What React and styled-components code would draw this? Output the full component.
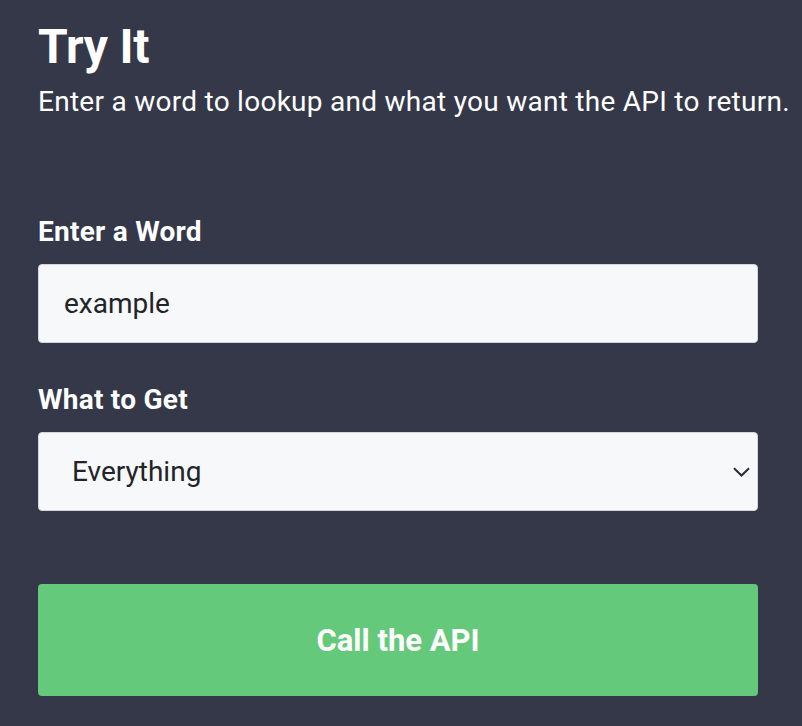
import React, { useState } from "react";
import styled, { createGlobalStyle } from "styled-components";

const GlobalStyle = createGlobalStyle`
  html, body {
    margin: 0;
    padding: 0;
    background: #343849;
  }
  body {
    font-family: Roboto, "Open Sans", Arial, sans-serif;
    -webkit-font-smoothing: antialiased;
  }
`;

const Page = styled.main`
  box-sizing: border-box;
  width: 802px;
  min-height: 726px;
  padding: 19px 0 30px 38px;
  background: #343849;
  color: #ffffff;
`;

const Title = styled.h1`
  margin: 0;
  font-size: 48px;
  line-height: 56px;
  font-weight: 700;
  letter-spacing: -0.2px;
`;

const Subtitle = styled.p`
  margin: 11px 0 0;
  font-size: 28px;
  line-height: 32px;
  font-weight: 400;
  letter-spacing: 0.27px;
  white-space: nowrap;
`;

const Form = styled.form`
  display: flex;
  flex-direction: column;
  width: 720px;
  margin-top: 98px;
`;

const Field = styled.div`
  display: flex;
  flex-direction: column;
  gap: 16px;
  margin-bottom: ${(p) => p.$after}px;
`;

const Label = styled.label`
  font-size: 28px;
  line-height: 32px;
  font-weight: 700;
  letter-spacing: 0.25px;
`;

const boxStyles = `
  box-sizing: border-box;
  width: 100%;
  height: 79px;
  margin: 0;
  border: 1px solid #d3d6dc;
  border-radius: 4px;
  background: #f7f8fa;
  color: #222428;
  font-family: Roboto, "Open Sans", Arial, sans-serif;
  font-size: 28px;
  outline: none;
`;

const TextInput = styled.input`
  ${boxStyles}
  padding: 0 25px;
`;

const SelectWrap = styled.div`
  position: relative;
  width: 100%;
`;

const Select = styled.select`
  ${boxStyles}
  appearance: none;
  -webkit-appearance: none;
  padding: 0 50px 0 33px;
`;

const Chevron = styled.svg`
  position: absolute;
  right: 8px;
  top: 35px;
  width: 17px;
  height: 10px;
  pointer-events: none;
`;

const Button = styled.button`
  box-sizing: border-box;
  width: 100%;
  height: 112px;
  border: none;
  border-radius: 4px;
  background: #64c97a;
  color: #ffffff;
  font-family: Roboto, "Open Sans", Arial, sans-serif;
  font-size: 31px;
  font-weight: 700;
  cursor: pointer;
`;

export default function App() {
  const [word, setWord] = useState("example");
  const [what, setWhat] = useState("everything");
  return (
    <>
      <GlobalStyle />
      <Page>
        <Title>Try It</Title>
        <Subtitle>Enter a word to lookup and what you want the API to return.</Subtitle>
        <Form onSubmit={(e) => e.preventDefault()}>
          <Field $after={41}>
            <Label htmlFor="word">Enter a Word</Label>
            <TextInput id="word" value={word} onChange={(e) => setWord(e.target.value)} />
          </Field>
          <Field $after={73}>
            <Label htmlFor="what">What to Get</Label>
            <SelectWrap>
              <Select id="what" value={what} onChange={(e) => setWhat(e.target.value)}>
                <option value="everything">Everything</option>
                <option value="definitions">Definitions</option>
                <option value="synonyms">Synonyms</option>
              </Select>
              <Chevron viewBox="0 0 17 10" fill="none">
                <path d="M1 1.2 L8.5 8.5 L16 1.2" stroke="#2b2d31" strokeWidth="2" />
              </Chevron>
            </SelectWrap>
          </Field>
          <Button type="submit">Call the API</Button>
        </Form>
      </Page>
    </>
  );
}
